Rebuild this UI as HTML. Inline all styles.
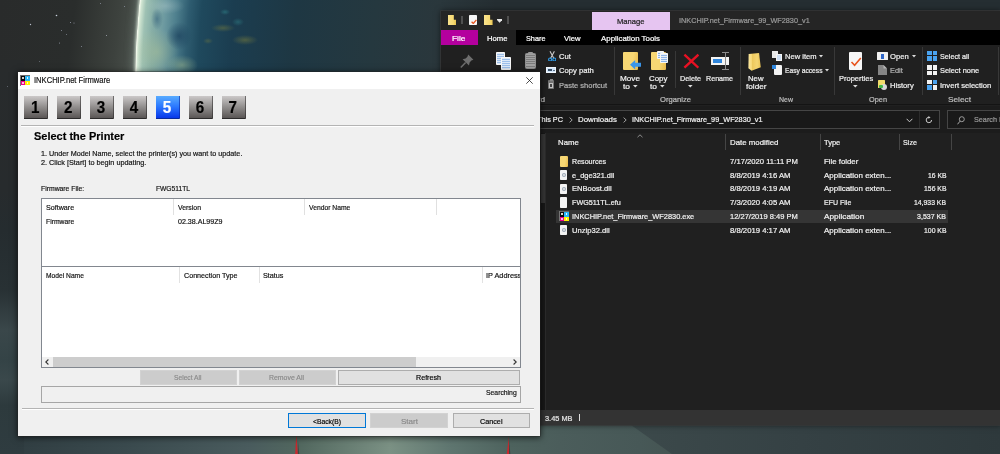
<!DOCTYPE html>
<html><head><meta charset="utf-8"><title>INKCHIP.net Firmware</title>
<style>
html,body{margin:0;padding:0;}
body{width:1000px;height:454px;overflow:hidden;position:relative;background:#2a2d2c;font-family:"Liberation Sans",sans-serif;}
#wall,#ex,#dlg{position:absolute;left:0;top:0;width:1000px;height:454px;overflow:hidden;}
#wall div,#ex div,#dlg div,svg,.t{position:absolute;}
.t{white-space:pre;line-height:1;transform-origin:0 0;}
#ex .t{-webkit-text-stroke:0.22px currentColor;}
#dlg .t{-webkit-text-stroke:0.18px currentColor;}
#wall{background:linear-gradient(90deg,#2f3c40 0,#3a4a4e 125px,#4a5c5e 250px,#52685f 300px,#7b9184 390px,#5f7670 450px,#4e635e 510px,#4b5d5b 560px,#475857 640px,#44524f 700px,#3c4a4b 1000px);}
#diag{left:600px;top:420px;width:400px;height:34px;clip-path:polygon(24px 0,400px 0,400px 34px,72px 34px);background:linear-gradient(90deg,#3d4b4c 0,#3a4749 80px,#354144 200px,#2e393c 400px);filter:blur(0.6px);}
#pclip{left:0;top:0;width:1000px;height:76px;overflow:hidden;background:linear-gradient(97deg,#292b2b 0,#2a2d2c 75px,#353936 100px,#3d423e 120px,#474d48 137px,#262d2e 441px,#1f2526 600px,#1b1f20 820px,#1a1d1e 1000px);}
#stars{left:0;top:0;width:1.3px;height:1.3px;border-radius:50%;background:transparent;box-shadow:56px 15px 0 0.3px #c9d0dc,30px 24px 0 0.2px #b9bfca,70px 22px 0 0 #9aa0ad,73.5px 22.5px 0 0 #9aa0ad,61px 30px 0 0 #8d93a0,66px 34px 0 0 #80858f,59px 42.5px 0 0 #9aa0ad,81px 46px 0 0 #8d93a0,106px 35px 0 0 #a9afba,100px 3px 0 0 #8d93a0,124px 6px 0 0 #8d93a0,39px 61px 0 0 #70757f,7px 86px 0 0 #70757f;}
#left{left:0;top:60px;width:24px;height:394px;background:linear-gradient(#282b2c 0,#272b2d 130px,#252c2f 170px,#283134 230px,#3a474a 270px,#344346 300px,#3a484b 320px,#2d3a3d 345px,#2f3c40 394px);}
#planet{left:135.4px;top:-700px;width:1570px;height:1570px;border-radius:50%;
 background:
  radial-gradient(ellipse 6px 11px at 22px 719px, rgba(45,90,120,.55), rgba(45,90,120,0) 100%),
  radial-gradient(ellipse 13px 14px at 44px 736px, rgba(28,66,94,.75), rgba(28,66,94,0) 100%),
  radial-gradient(ellipse 22px 24px at 22px 752px, rgba(172,194,150,.5), rgba(172,194,150,0) 100%),
  radial-gradient(ellipse 16px 10px at 47px 765px, rgba(160,185,140,.5), rgba(160,185,140,0) 100%),
  radial-gradient(ellipse 20px 8px at 30px 706px, rgba(185,208,210,.35), rgba(185,208,210,0) 100%),
  radial-gradient(ellipse 12px 4px at 88px 728px, rgba(125,128,60,.45), rgba(125,128,60,0) 100%),
  radial-gradient(ellipse 13px 5px at 110px 740px, rgba(125,128,60,.5), rgba(125,128,60,0) 100%),
  radial-gradient(ellipse 5px 3px at 73px 741px, rgba(120,125,60,.4), rgba(120,125,60,0) 100%),
  radial-gradient(ellipse 5px 3px at 90px 712px, rgba(60,170,170,.35), rgba(60,170,170,0) 100%),
  radial-gradient(ellipse 6px 4px at 103px 722px, rgba(60,170,170,.3), rgba(60,170,170,0) 100%),
  radial-gradient(closest-side, #252e32 0,#252e32 55%,#2a373c 62%,#25383f 70%,#1e3743 80%,#1b3d50 88%,#1f495d 92%,#2e5c70 93.6%,#4f808e 95.2%,#6c99a0 96.6%,#84aca6 98%,#9ec1b3 99.1%,#cfe4d1 99.7%,#f2f9ec 99.9%,#f2f9ec 100%);
 box-shadow:-1px 0 3px rgba(225,240,225,.75),-3px 0 9px rgba(150,170,160,.35);}
.red{background:#c8282d;}
</style></head>
<body>
<div id="wall">
<div id="pclip"><div id="planet"></div></div>
<div id="left"></div>
<div id="diag"></div>
<div id="stars"></div>
<svg style="left:290px;top:430px" width="230" height="24" viewBox="0 0 230 24"><path d="M6.3 4 L7.9 24 L5.2 24Z" fill="#c8282d"/><path d="M7.9 10 L9.2 24 L7.9 24Z" fill="rgba(30,35,35,.45)"/><path d="M218.9 6.5 L219 24 L216.8 24Z" fill="#c8282d"/><path d="M219 10 L220.4 24 L219 24Z" fill="rgba(30,35,35,.4)"/></svg>
</div>
<div id="ex"><div style="left:440.5px;top:10.5px;width:560px;height:414px;background:#202020;box-shadow:0 0 0 0.7px #3a3a3a,0 0 6px rgba(0,0,0,.6)"></div>
<div style="left:440.5px;top:10.5px;width:560px;height:19.5px;background:#252525;"></div>
<div style="left:440.5px;top:30px;width:560px;height:14.8px;background:#000;"></div>
<div style="left:441px;top:30px;width:37px;height:14.8px;background:#b4009e;"></div>
<div style="left:478px;top:30px;width:38px;height:14.8px;background:#202020;"></div>
<div style="left:592px;top:12px;width:78px;height:18px;background:#e6c5f1;"></div>
<span class="t" style="left:616.50px;top:17.98px;font-size:8.1px;color:#222;transform:scaleX(0.9402);">Manage</span>
<span class="t" style="left:678.80px;top:16.98px;font-size:7.9px;color:#9a9a9a;transform:scaleX(0.9236);">INKCHIP.net_Firmware_99_WF2830_v1</span>
<span class="t" style="left:452.00px;top:34.98px;font-size:8.1px;color:#fff;transform:scaleX(1.0347);">File</span>
<span class="t" style="left:487.00px;top:34.98px;font-size:8.1px;color:#fff;transform:scaleX(0.9493);">Home</span>
<span class="t" style="left:525.50px;top:34.98px;font-size:8.1px;color:#fff;transform:scaleX(0.9024);">Share</span>
<span class="t" style="left:564.00px;top:34.98px;font-size:8.1px;color:#fff;transform:scaleX(0.9479);">View</span>
<span class="t" style="left:600.50px;top:34.98px;font-size:8.1px;color:#fff;transform:scaleX(0.9737);">Application Tools</span>
<div style="left:447.5px;top:14.5px;width:8.8px;height:10.5px;background:#f8dc7c;clip-path:polygon(0 0,72% 0,72% 50%,100% 50%,100% 100%,0 100%);background:linear-gradient(90deg,#fbe38d 0,#f6d870 70%,#e8c350 100%)"></div>
<div style="left:461.3px;top:16px;width:1.4px;height:8.2px;background:#505050;"></div>
<div style="left:469.4px;top:15.2px;width:7.8px;height:10.2px;background:#f6f6f6;border-radius:0.8px"></div>
<svg style="left:470.6px;top:18.5px" width="6" height="5.5" viewBox="0 0 6 5.5"><path d="M0.6 2.8 L2.3 4.5 L5.4 0.8" fill="none" stroke="#e8541e" stroke-width="1.3"/></svg>
<div style="left:483.8px;top:14.5px;width:8.8px;height:10.5px;background:#f8dc7c;clip-path:polygon(0 0,72% 0,72% 50%,100% 50%,100% 100%,0 100%);background:linear-gradient(90deg,#fbe38d 0,#f6d870 70%,#e8c350 100%)"></div>
<div style="left:497.2px;top:18.6px;width:5.2px;height:1px;background:#e6e6e6;"></div>
<svg style="left:497.2px;top:20.4px" width="5.2" height="3" viewBox="0 0 5.2 3"><path d="M0 0 L5.2 0 L2.6 2.8Z" fill="#e6e6e6"/></svg>
<div style="left:507.2px;top:16px;width:1.4px;height:8.2px;background:#505050;"></div>
<div style="left:613.7px;top:47px;width:1px;height:48px;background:#383838;"></div>
<div style="left:675px;top:51px;width:1px;height:37px;background:#383838;"></div>
<div style="left:739.5px;top:47px;width:1px;height:48px;background:#383838;"></div>
<div style="left:834px;top:47px;width:1px;height:48px;background:#383838;"></div>
<div style="left:922px;top:47px;width:1px;height:48px;background:#383838;"></div>
<div style="left:998px;top:47px;width:1px;height:48px;background:#383838;"></div>
<svg style="left:459.5px;top:54px" width="14" height="14.5" viewBox="0 0 14 14.5"><path d="M8.2 0.6 L13.4 5.8 L11.4 6.6 L9.6 8.6 L9 11.6 L2.6 5.2 L5.6 4.6 L7.4 2.8Z" fill="#6e6e6e"/><path d="M5.6 8.6 L0.8 13.6" stroke="#6e6e6e" stroke-width="1.5"/></svg>
<div style="left:495.6px;top:52px;width:9.4px;height:12.6px;background:#e8f0fa;border-radius:0.8px;border:0.9px solid #f7f7f7;box-sizing:border-box;background:repeating-linear-gradient(#dce9f8 0 1.1px,#9dbfea 1.1px 2.1px)"></div>
<div style="left:500.9px;top:57px;width:10px;height:12.6px;background:#e8f0fa;border-radius:0.8px;border:0.9px solid #f7f7f7;box-sizing:border-box;background:repeating-linear-gradient(#dce9f8 0 1.1px,#9dbfea 1.1px 2.1px)"></div>
<div style="left:525px;top:53.4px;width:11.3px;height:15.6px;background:#8a8a8a;border-radius:1.2px;background:repeating-linear-gradient(#a2a2a2 0 1.1px,#7c7c7c 1.1px 2.1px);border:0.8px solid #8f8f8f;box-sizing:border-box"></div>
<div style="left:528.2px;top:51.8px;width:5px;height:2.6px;background:#9a9a9a;border-radius:1px 1px 0 0"></div>
<svg style="left:547.6px;top:50.6px" width="8.4" height="10.6" viewBox="0 0 8.4 10.6"><path d="M2 0.3 L5.9 7.4 M6.4 0.3 L2.5 7.4" stroke="#c9c9c9" stroke-width="1.1" fill="none"/><circle cx="2.1" cy="8.5" r="1.5" fill="none" stroke="#2f9be8" stroke-width="1.1"/><circle cx="6.3" cy="8.5" r="1.5" fill="none" stroke="#2f9be8" stroke-width="1.1"/></svg>
<span class="t" style="left:559.00px;top:52.98px;font-size:8.1px;color:#f0f0f0;transform:scaleX(0.9358);">Cut</span>
<div style="left:546.3px;top:67px;width:10px;height:6.4px;background:#d2e7fb;border:0.7px solid #f2f8fe;box-sizing:border-box"></div>
<div style="left:548px;top:69.3px;width:4.2px;height:1.8px;background:#3a4f66;"></div>
<div style="left:553px;top:70.2px;width:2px;height:0.9px;background:#5a6f86;"></div>
<span class="t" style="left:559.00px;top:66.97px;font-size:8.1px;color:#f0f0f0;transform:scaleX(0.9429);">Copy path</span>
<div style="left:547.7px;top:80px;width:6.8px;height:9px;background:#747474;border-radius:0.8px"></div>
<div style="left:549.6px;top:79.2px;width:3px;height:1.6px;background:#8a8a8a;"></div>
<div style="left:549px;top:82.6px;width:4.2px;height:5.2px;background:#c4c4c4;"></div>
<div style="left:550.4px;top:84px;width:1.6px;height:2.6px;background:#444;"></div>
<span class="t" style="left:559.00px;top:81.97px;font-size:8.1px;color:#b4b4b4;transform:scaleX(0.9275);">Paste shortcut</span>
<span class="t" style="left:509.60px;top:95.97px;font-size:7.9px;color:#bdbdbd;transform:scaleX(1.0361);">Clipboard</span>
<div style="left:623px;top:52px;width:15px;height:18px;background:#f7d774;border-radius:1px;background:linear-gradient(100deg,#f7d774 60%,#e9b949)"></div>
<svg style="left:629.8px;top:60.3px" width="11" height="9.4" viewBox="0 0 11 9.4"><path d="M0 4.7 L5.2 0 L5.2 2.7 L11 2.7 L11 6.7 L5.2 6.7 L5.2 9.4Z" fill="#3b96ea"/></svg>
<span class="t" style="left:620.00px;top:74.97px;font-size:8.1px;color:#f0f0f0;transform:scaleX(1.0103);">Move</span>
<span class="t" style="left:622.50px;top:82.97px;font-size:8.1px;color:#f0f0f0;transform:scaleX(1.0346);">to</span>
<svg style="left:632.6px;top:85.2px" width="5" height="3" viewBox="0 0 5 3"><path d="M0 0 L4.6 0 L2.3 2.6Z" fill="#ddd"/></svg>
<div style="left:651px;top:52px;width:15.2px;height:18px;background:#f7d774;border-radius:1px;background:linear-gradient(100deg,#f7d774 60%,#e9b949)"></div>
<div style="left:657px;top:50.5px;width:6.8px;height:8.8px;background:#e8f0fa;border-radius:0.8px;border:0.8px solid #f7f7f7;box-sizing:border-box;background:repeating-linear-gradient(#e4eefa 0 1.1px,#8fb4e6 1.1px 2.1px)"></div>
<div style="left:660.3px;top:53px;width:7.8px;height:9.6px;background:#e8f0fa;border-radius:0.8px;border:0.8px solid #f7f7f7;box-sizing:border-box;background:repeating-linear-gradient(#e4eefa 0 1.1px,#8fb4e6 1.1px 2.1px)"></div>
<span class="t" style="left:648.50px;top:74.97px;font-size:8.1px;color:#f0f0f0;transform:scaleX(0.9785);">Copy</span>
<span class="t" style="left:650.00px;top:82.97px;font-size:8.1px;color:#f0f0f0;transform:scaleX(1.0346);">to</span>
<svg style="left:660px;top:85.2px" width="5" height="3" viewBox="0 0 5 3"><path d="M0 0 L4.6 0 L2.3 2.6Z" fill="#ddd"/></svg>
<svg style="left:682.6px;top:52.6px" width="16.8" height="16.4" viewBox="0 0 18 17"><path d="M1.5 1.5 L16.5 15.5 M16.5 1.5 L1.5 15.5" stroke="#e81123" stroke-width="2.6" fill="none"/></svg>
<span class="t" style="left:680.00px;top:74.97px;font-size:8.1px;color:#f0f0f0;transform:scaleX(0.8972);">Delete</span>
<svg style="left:688.2px;top:84.8px" width="5" height="3" viewBox="0 0 5 3"><path d="M0 0 L4.6 0 L2.3 2.6Z" fill="#ddd"/></svg>
<div style="left:710.6px;top:56.5px;width:18.4px;height:8.6px;background:#f4f4f4;"></div>
<div style="left:713px;top:59px;width:8.6px;height:3.8px;background:#2f86dc;"></div>
<div style="left:725px;top:52.3px;width:1.1px;height:17.6px;background:#8c8c8c;"></div>
<div style="left:722.4px;top:52px;width:2.4px;height:1px;background:#8c8c8c;"></div>
<div style="left:726.3px;top:52px;width:2.4px;height:1px;background:#8c8c8c;"></div>
<div style="left:722.4px;top:69.2px;width:2.4px;height:1px;background:#8c8c8c;"></div>
<div style="left:726.3px;top:69.2px;width:2.4px;height:1px;background:#8c8c8c;"></div>
<span class="t" style="left:706.00px;top:74.97px;font-size:8.1px;color:#f0f0f0;transform:scaleX(0.8825);">Rename</span>
<span class="t" style="left:660.00px;top:95.97px;font-size:7.9px;color:#bdbdbd;transform:scaleX(0.9678);">Organize</span>
<div style="left:748.4px;top:53px;width:12.4px;height:17.8px;background:#f6d46c;clip-path:polygon(2% 5%,86% 0,100% 80%,26% 100%,0 86%);background:linear-gradient(90deg,#fce9a4 0,#f7d875 30%,#edc85c 32%,#f5d672 70%,#e6bf52 100%)"></div>
<span class="t" style="left:748.00px;top:74.97px;font-size:8.1px;color:#f0f0f0;transform:scaleX(0.9566);">New</span>
<span class="t" style="left:745.50px;top:82.97px;font-size:8.1px;color:#f0f0f0;transform:scaleX(1.0123);">folder</span>
<div style="left:772px;top:50.5px;width:6px;height:7px;background:#e9e9e9;"></div>
<div style="left:775.5px;top:53.5px;width:6.5px;height:7.5px;background:#cfe0f5;border:0.8px solid #f5f5f5;box-sizing:border-box"></div>
<span class="t" style="left:784.50px;top:52.98px;font-size:8.1px;color:#f0f0f0;transform:scaleX(0.9338);">New item</span>
<svg style="left:818.5px;top:54.5px" width="4" height="3" viewBox="0 0 4 3"><path d="M0 0 L4 0 L2 2.4Z" fill="#ddd"/></svg>
<div style="left:773.5px;top:65px;width:8px;height:10px;background:#f2f2f2;border-radius:1px"></div>
<div style="left:772px;top:65px;width:3.5px;height:3.5px;background:#2f86dc;"></div>
<span class="t" style="left:784.50px;top:66.97px;font-size:8.1px;color:#f0f0f0;transform:scaleX(0.8253);">Easy access</span>
<svg style="left:824.5px;top:69px" width="4" height="3" viewBox="0 0 4 3"><path d="M0 0 L4 0 L2 2.4Z" fill="#ddd"/></svg>
<span class="t" style="left:779.00px;top:95.97px;font-size:7.9px;color:#bdbdbd;transform:scaleX(0.8863);">New</span>
<div style="left:848.8px;top:52px;width:13.5px;height:18px;background:#f6f6f6;border-radius:1px"></div>
<svg style="left:849.5px;top:56.5px" width="12" height="10" viewBox="0 0 12 10"><path d="M1.5 5 L4.6 8.2 L10.8 1" fill="none" stroke="#e8541e" stroke-width="1.6"/></svg>
<span class="t" style="left:838.80px;top:74.97px;font-size:8.1px;color:#f0f0f0;transform:scaleX(0.9271);">Properties</span>
<svg style="left:853.3px;top:84.8px" width="5" height="3" viewBox="0 0 5 3"><path d="M0 0 L4.6 0 L2.3 2.6Z" fill="#ddd"/></svg>
<div style="left:877px;top:52px;width:10.8px;height:8px;background:#f0f0f0;border-radius:0.5px"></div>
<div style="left:880.5px;top:54px;width:3.8px;height:4.5px;background:#2f66c8;"></div>
<span class="t" style="left:889.80px;top:52.98px;font-size:8.1px;color:#f0f0f0;transform:scaleX(0.9489);">Open</span>
<svg style="left:911.5px;top:54.5px" width="4" height="3" viewBox="0 0 4 3"><path d="M0 0 L4 0 L2 2.4Z" fill="#ddd"/></svg>
<svg style="left:878px;top:65px" width="9" height="10" viewBox="0 0 9 10"><path d="M0 0 L5.5 0 L9 3.5 L9 10 L0 10Z" fill="#858585"/><path d="M5.5 0 L5.5 3.5 L9 3.5Z" fill="#b5b5b5"/></svg>
<span class="t" style="left:889.80px;top:66.97px;font-size:8.1px;color:#b4b4b4;transform:scaleX(0.9174);">Edit</span>
<div style="left:877.5px;top:79.5px;width:7.5px;height:8.5px;background:#f2dc6b;border-radius:0.5px"></div>
<div style="left:880.5px;top:83.5px;width:6.5px;height:6.5px;background:#d9d9d9;border-radius:50%"></div>
<div style="left:879px;top:84.5px;width:3.5px;height:3px;background:#41b649;border-radius:1px"></div>
<span class="t" style="left:889.80px;top:81.97px;font-size:8.1px;color:#f0f0f0;transform:scaleX(0.9409);">History</span>
<span class="t" style="left:868.50px;top:95.97px;font-size:7.9px;color:#bdbdbd;transform:scaleX(0.9320);">Open</span>
<div style="left:927.0px;top:51.0px;width:4.6px;height:4.4px;background:#4aa3f0;"></div><div style="left:932.6px;top:51.0px;width:4.6px;height:4.4px;background:#4aa3f0;"></div><div style="left:927.0px;top:56.4px;width:4.6px;height:4.4px;background:#4aa3f0;"></div><div style="left:932.6px;top:56.4px;width:4.6px;height:4.4px;background:#4aa3f0;"></div>
<span class="t" style="left:939.80px;top:52.98px;font-size:8.1px;color:#f0f0f0;transform:scaleX(0.8891);">Select all</span>
<div style="left:927.0px;top:65.4px;width:4.6px;height:4.4px;background:#f2f2f2;"></div><div style="left:932.6px;top:65.4px;width:4.6px;height:4.4px;background:#f2f2f2;"></div><div style="left:927.0px;top:70.80000000000001px;width:4.6px;height:4.4px;background:#f2f2f2;"></div><div style="left:932.6px;top:70.80000000000001px;width:4.6px;height:4.4px;background:#f2f2f2;"></div>
<span class="t" style="left:939.80px;top:66.97px;font-size:8.1px;color:#f0f0f0;transform:scaleX(0.9170);">Select none</span>
<div style="left:927.0px;top:79.8px;width:4.6px;height:4.4px;background:#f2f2f2;"></div><div style="left:932.6px;top:79.8px;width:4.6px;height:4.4px;background:#4aa3f0;"></div><div style="left:927.0px;top:85.2px;width:4.6px;height:4.4px;background:#4aa3f0;"></div><div style="left:932.6px;top:85.2px;width:4.6px;height:4.4px;background:#f2f2f2;"></div>
<span class="t" style="left:939.80px;top:81.97px;font-size:8.1px;color:#f0f0f0;transform:scaleX(0.9405);">Invert selection</span>
<span class="t" style="left:947.50px;top:95.97px;font-size:7.9px;color:#bdbdbd;transform:scaleX(1.0484);">Select</span>
<div style="left:440.5px;top:104.3px;width:560px;height:1.2px;background:#141414;"></div>
<div style="left:440.5px;top:105.5px;width:560px;height:27px;background:#1c1c1c;"></div>
<div style="left:500px;top:109.5px;width:439.5px;height:19.5px;background:#191919;border:1px solid #454545;box-sizing:border-box"></div>
<div style="left:918.7px;top:110.5px;width:1px;height:17.5px;background:#2c2c2c;"></div>
<div style="left:946.8px;top:109.5px;width:60px;height:19.5px;background:#191919;border:1px solid #454545;box-sizing:border-box"></div>
<span class="t" style="left:536.50px;top:115.97px;font-size:8.1px;color:#f0f0f0;transform:scaleX(0.9029);">This PC</span>
<span class="t" style="left:578.00px;top:115.97px;font-size:8.1px;color:#f0f0f0;transform:scaleX(0.9689);">Downloads</span>
<span class="t" style="left:632.00px;top:115.97px;font-size:8.1px;color:#f0f0f0;transform:scaleX(0.8990);">INKCHIP.net_Firmware_99_WF2830_v1</span>
<svg style="left:569px;top:117px" width="4" height="6" viewBox="0 0 4 6"><path d="M0.6 0.6 L3.2 3 L0.6 5.4" fill="none" stroke="#b0b0b0" stroke-width="0.9"/></svg>
<svg style="left:622.5px;top:117px" width="4" height="6" viewBox="0 0 4 6"><path d="M0.6 0.6 L3.2 3 L0.6 5.4" fill="none" stroke="#b0b0b0" stroke-width="0.9"/></svg>
<svg style="left:906px;top:118px" width="7" height="5" viewBox="0 0 7 5"><path d="M0.6 0.8 L3.5 3.8 L6.4 0.8" fill="none" stroke="#c8c8c8" stroke-width="1"/></svg>
<svg style="left:925px;top:116px" width="8" height="8" viewBox="0 0 8 8"><path d="M6.6 4 A2.7 2.7 0 1 1 4 1.3" fill="none" stroke="#c8c8c8" stroke-width="1"/><path d="M3.4 0 L5.6 1.4 L3.4 2.8Z" fill="#c8c8c8"/></svg>
<svg style="left:957px;top:115.5px" width="8" height="9" viewBox="0 0 8 9"><circle cx="4.8" cy="3.2" r="2.5" fill="none" stroke="#a8a8a8" stroke-width="0.9"/><path d="M3 5.2 L0.5 8.3" stroke="#a8a8a8" stroke-width="1"/></svg>
<span class="t" style="left:974.00px;top:115.97px;font-size:8.1px;color:#9a9a9a;transform:scaleX(0.8953);">Search I</span>
<div style="left:540px;top:132.5px;width:5px;height:277.5px;background:#181818;"></div>
<div style="left:540.5px;top:134px;width:4.3px;height:69px;background:#363636;"></div>
<div style="left:545px;top:132.5px;width:0.8px;height:277.5px;background:#2b2b2b;"></div>
<span class="t" style="left:558.00px;top:138.97px;font-size:8.1px;color:#f0f0f0;transform:scaleX(0.9632);">Name</span>
<svg style="left:636.5px;top:133.5px" width="6" height="4" viewBox="0 0 6 4"><path d="M0.5 3.2 L3 0.8 L5.5 3.2" fill="none" stroke="#aaa" stroke-width="0.8"/></svg>
<div style="left:724.5px;top:133.6px;width:1px;height:16px;background:#454545;"></div>
<div style="left:819.7px;top:133.6px;width:1px;height:16px;background:#454545;"></div>
<div style="left:898.5px;top:133.6px;width:1px;height:16px;background:#454545;"></div>
<div style="left:951.4px;top:133.6px;width:1px;height:16px;background:#454545;"></div>
<span class="t" style="left:729.50px;top:138.97px;font-size:8.1px;color:#f0f0f0;transform:scaleX(0.9709);">Date modified</span>
<span class="t" style="left:823.70px;top:138.97px;font-size:8.1px;color:#f0f0f0;transform:scaleX(0.9289);">Type</span>
<span class="t" style="left:902.50px;top:138.97px;font-size:8.1px;color:#f0f0f0;transform:scaleX(0.8889);">Size</span>
<div style="left:556px;top:210px;width:391.5px;height:13px;background:#353535;"></div>
<span class="t" style="left:571.80px;top:157.97px;font-size:8.1px;color:#f0f0f0;transform:scaleX(0.8788);">Resources</span>
<span class="t" style="left:729.50px;top:157.97px;font-size:8.1px;color:#f0f0f0;transform:scaleX(0.9456);">7/17/2020 11:11 PM</span>
<span class="t" style="left:823.70px;top:157.97px;font-size:8.1px;color:#f0f0f0;transform:scaleX(0.9649);">File folder</span>
<div style="left:559.6px;top:156.0px;width:8px;height:10.6px;background:#f7d774;border-radius:1px;background:linear-gradient(100deg,#f7d774 60%,#e9b949)"></div>
<span class="t" style="left:571.80px;top:171.97px;font-size:8.1px;color:#f0f0f0;transform:scaleX(0.9103);">e_dge321.dll</span>
<span class="t" style="left:729.50px;top:171.97px;font-size:8.1px;color:#f0f0f0;transform:scaleX(0.9535);">8/8/2019 4:16 AM</span>
<span class="t" style="left:823.70px;top:171.97px;font-size:8.1px;color:#f0f0f0;transform:scaleX(0.9841);">Application exten...</span>
<span class="t" style="left:927.50px;top:171.97px;font-size:8.1px;color:#f0f0f0;transform:scaleX(0.8385);">16 KB</span>
<div style="left:560px;top:169.78px;width:7.4px;height:10.4px;background:#f4f4f4;border-radius:0.8px"></div>
<div style="left:561.6px;top:172.78px;width:4.4px;height:4.4px;background:#9aa7b5;border-radius:50%"></div>
<div style="left:562.8px;top:173.98px;width:2px;height:2px;background:#e8e8e8;border-radius:50%"></div>
<span class="t" style="left:571.80px;top:184.97px;font-size:8.1px;color:#f0f0f0;transform:scaleX(0.9386);">ENBoost.dll</span>
<span class="t" style="left:729.50px;top:184.97px;font-size:8.1px;color:#f0f0f0;transform:scaleX(0.9535);">8/8/2019 4:19 AM</span>
<span class="t" style="left:823.70px;top:184.97px;font-size:8.1px;color:#f0f0f0;transform:scaleX(0.9841);">Application exten...</span>
<span class="t" style="left:923.50px;top:184.97px;font-size:8.1px;color:#f0f0f0;transform:scaleX(0.8471);">156 KB</span>
<div style="left:560px;top:183.56px;width:7.4px;height:10.4px;background:#f4f4f4;border-radius:0.8px"></div>
<div style="left:561.6px;top:186.56px;width:4.4px;height:4.4px;background:#9aa7b5;border-radius:50%"></div>
<div style="left:562.8px;top:187.76px;width:2px;height:2px;background:#e8e8e8;border-radius:50%"></div>
<span class="t" style="left:571.80px;top:198.97px;font-size:8.1px;color:#f0f0f0;transform:scaleX(0.8898);">FWG511TL.efu</span>
<span class="t" style="left:729.50px;top:198.97px;font-size:8.1px;color:#f0f0f0;transform:scaleX(0.9535);">7/3/2020 4:05 AM</span>
<span class="t" style="left:823.70px;top:198.97px;font-size:8.1px;color:#f0f0f0;transform:scaleX(0.8671);">EFU File</span>
<span class="t" style="left:914.00px;top:198.97px;font-size:8.1px;color:#f0f0f0;transform:scaleX(0.8463);">14,933 KB</span>
<div style="left:560px;top:197.34px;width:7.4px;height:10.4px;background:#f4f4f4;border-radius:0.8px"></div>
<span class="t" style="left:571.80px;top:212.97px;font-size:8.1px;color:#f0f0f0;transform:scaleX(0.9126);">INKCHIP.net_Firmware_WF2830.exe</span>
<span class="t" style="left:729.50px;top:212.97px;font-size:8.1px;color:#f0f0f0;transform:scaleX(0.9300);">12/27/2019 8:49 PM</span>
<span class="t" style="left:823.70px;top:212.97px;font-size:8.1px;color:#f0f0f0;transform:scaleX(1.0174);">Application</span>
<span class="t" style="left:917.00px;top:212.97px;font-size:8.1px;color:#f0f0f0;transform:scaleX(0.8705);">3,537 KB</span>
<div style="left:559.3px;top:211.32px;width:9.579px;height:0.93px;background:#6a6a6a;"></div><div style="left:559.3px;top:211.32px;width:0.7440000000000001px;height:9.858px;background:#777;"></div><div style="left:560.044px;top:212.25px;width:4.278px;height:4.278px;background:#0d0d0d;"></div><div style="left:561.439px;top:213.459px;width:1.4880000000000002px;height:1.86px;background:#f0f0f0;border-radius:40%"></div><div style="left:564.322px;top:212.25px;width:4.278px;height:4.278px;background:#29b6f6;"></div><div style="left:565.624px;top:213.459px;width:1.395px;height:1.86px;background:#e2f4fe;"></div><div style="left:560.044px;top:216.528px;width:4.278px;height:4.5569999999999995px;background:#ec008c;"></div><div style="left:561.439px;top:217.737px;width:1.395px;height:1.86px;background:#fab9df;"></div><div style="left:564.322px;top:216.528px;width:4.278px;height:4.5569999999999995px;background:#fff200;"></div><div style="left:565.624px;top:217.737px;width:1.302px;height:1.86px;background:#fffcc0;"></div>
<span class="t" style="left:571.80px;top:226.97px;font-size:8.1px;color:#f0f0f0;transform:scaleX(0.9414);">Unzip32.dll</span>
<span class="t" style="left:729.50px;top:226.97px;font-size:8.1px;color:#f0f0f0;transform:scaleX(0.9535);">8/8/2019 4:17 AM</span>
<span class="t" style="left:823.70px;top:226.97px;font-size:8.1px;color:#f0f0f0;transform:scaleX(0.9841);">Application exten...</span>
<span class="t" style="left:923.50px;top:226.97px;font-size:8.1px;color:#f0f0f0;transform:scaleX(0.8471);">100 KB</span>
<div style="left:560px;top:224.9px;width:7.4px;height:10.4px;background:#f4f4f4;border-radius:0.8px"></div>
<div style="left:561.6px;top:227.9px;width:4.4px;height:4.4px;background:#9aa7b5;border-radius:50%"></div>
<div style="left:562.8px;top:229.1px;width:2px;height:2px;background:#e8e8e8;border-radius:50%"></div>
<div style="left:440.5px;top:410px;width:560px;height:14.5px;background:#333;"></div>
<span class="t" style="left:545.00px;top:414.98px;font-size:8.1px;color:#e6e6e6;transform:scaleX(0.9119);">3.45 MB</span>
<div style="left:579.2px;top:414px;width:0.9px;height:7.4px;background:#ddd;"></div></div>
<div id="dlg"><div style="left:17.5px;top:72px;width:522.5px;height:363.5px;background:#f0f0f0;box-shadow:0 0 0 0.6px rgba(40,40,40,.6),0 1px 6px 1px rgba(0,0,0,.6)"></div>
<div style="left:17.5px;top:72px;width:522.5px;height:17px;background:#fff;"></div>
<div style="left:20px;top:75px;width:10.3px;height:1.0px;background:#6a6a6a;"></div><div style="left:20px;top:75px;width:0.8px;height:10.6px;background:#777;"></div><div style="left:20.8px;top:76.0px;width:4.6px;height:4.6px;background:#0d0d0d;"></div><div style="left:22.3px;top:77.3px;width:1.6px;height:2.0px;background:#f0f0f0;border-radius:40%"></div><div style="left:25.4px;top:76.0px;width:4.6px;height:4.6px;background:#29b6f6;"></div><div style="left:26.799999999999997px;top:77.3px;width:1.5px;height:2.0px;background:#e2f4fe;"></div><div style="left:20.8px;top:80.6px;width:4.6px;height:4.8999999999999995px;background:#ec008c;"></div><div style="left:22.3px;top:81.89999999999999px;width:1.5px;height:2.0px;background:#fab9df;"></div><div style="left:25.4px;top:80.6px;width:4.6px;height:4.8999999999999995px;background:#fff200;"></div><div style="left:26.799999999999997px;top:81.89999999999999px;width:1.4px;height:2.0px;background:#fffcc0;"></div>
<span class="t" style="left:33.80px;top:75.97px;font-size:8.4px;color:#111;transform:scaleX(0.9061);">INKCHIP.net Firmware</span>
<svg style="left:526px;top:77px" width="7" height="7" viewBox="0 0 7 7"><path d="M0.3 0.3 L6.7 6.7 M6.7 0.3 L0.3 6.7" stroke="#222" stroke-width="0.8"/></svg>
<div style="left:24.3px;top:96.4px;width:23.7px;height:22.9px;background:linear-gradient(#cbc8c8,#918e8d 50%,#5a5655);box-sizing:border-box;border-right:1px solid rgba(40,38,38,.55);border-bottom:1.3px solid #2c2b2b"></div>
<span class="t" style="left:31.00px;top:98.6px;font-size:15.2px;font-weight:bold;color:#000;transform:scaleY(1.14);transform-origin:50% 55%">1</span>
<div style="left:57.230000000000004px;top:96.4px;width:23.7px;height:22.9px;background:linear-gradient(#cbc8c8,#918e8d 50%,#5a5655);box-sizing:border-box;border-right:1px solid rgba(40,38,38,.55);border-bottom:1.3px solid #2c2b2b"></div>
<span class="t" style="left:63.93px;top:98.6px;font-size:15.2px;font-weight:bold;color:#000;transform:scaleY(1.14);transform-origin:50% 55%">2</span>
<div style="left:90.16px;top:96.4px;width:23.7px;height:22.9px;background:linear-gradient(#cbc8c8,#918e8d 50%,#5a5655);box-sizing:border-box;border-right:1px solid rgba(40,38,38,.55);border-bottom:1.3px solid #2c2b2b"></div>
<span class="t" style="left:96.86px;top:98.6px;font-size:15.2px;font-weight:bold;color:#000;transform:scaleY(1.14);transform-origin:50% 55%">3</span>
<div style="left:123.08999999999999px;top:96.4px;width:23.7px;height:22.9px;background:linear-gradient(#cbc8c8,#918e8d 50%,#5a5655);box-sizing:border-box;border-right:1px solid rgba(40,38,38,.55);border-bottom:1.3px solid #2c2b2b"></div>
<span class="t" style="left:129.79px;top:98.6px;font-size:15.2px;font-weight:bold;color:#000;transform:scaleY(1.14);transform-origin:50% 55%">4</span>
<div style="left:156.02px;top:96.4px;width:23.7px;height:22.9px;background:linear-gradient(#59acff,#2b78ff 48%,#0838ea);box-sizing:border-box;border-right:1px solid rgba(10,40,160,.6);border-bottom:1.3px solid #0a2a9a"></div>
<span class="t" style="left:162.72px;top:98.6px;font-size:15.2px;font-weight:bold;color:#fff;transform:scaleY(1.14);transform-origin:50% 55%">5</span>
<div style="left:188.95000000000002px;top:96.4px;width:23.7px;height:22.9px;background:linear-gradient(#cbc8c8,#918e8d 50%,#5a5655);box-sizing:border-box;border-right:1px solid rgba(40,38,38,.55);border-bottom:1.3px solid #2c2b2b"></div>
<span class="t" style="left:195.65px;top:98.6px;font-size:15.2px;font-weight:bold;color:#000;transform:scaleY(1.14);transform-origin:50% 55%">6</span>
<div style="left:221.88px;top:96.4px;width:23.7px;height:22.9px;background:linear-gradient(#cbc8c8,#918e8d 50%,#5a5655);box-sizing:border-box;border-right:1px solid rgba(40,38,38,.55);border-bottom:1.3px solid #2c2b2b"></div>
<span class="t" style="left:228.58px;top:98.6px;font-size:15.2px;font-weight:bold;color:#000;transform:scaleY(1.14);transform-origin:50% 55%">7</span>
<div style="left:21px;top:124.6px;width:513px;height:1px;background:#b4b4b4;"></div>
<div style="left:21px;top:125.6px;width:513px;height:1px;background:#fff;"></div>
<span class="t" style="left:34.40px;top:130.97px;font-size:11.3px;color:#000;font-weight:bold;transform:scaleX(0.9729);">Select the Printer</span>
<span class="t" style="left:40.60px;top:149.97px;font-size:7.2px;color:#111;transform:scaleX(1.0042);">1. Under Model Name, select the printer(s) you want to update.</span>
<span class="t" style="left:40.60px;top:158.97px;font-size:7.2px;color:#111;transform:scaleX(1.0145);">2. Click [Start] to begin updating.</span>
<span class="t" style="left:40.60px;top:184.97px;font-size:7.2px;color:#111;transform:scaleX(0.9488);">Firmware File:</span>
<span class="t" style="left:155.50px;top:184.97px;font-size:7.2px;color:#111;transform:scaleX(0.9283);">FWG511TL</span>
<div style="left:41px;top:198px;width:480px;height:170.3px;background:#fff;box-sizing:border-box;border:1px solid #82878f"></div>
<div style="left:41px;top:265.6px;width:480px;height:1.2px;background:#82878f;"></div>
<div style="left:173px;top:199px;width:1px;height:15.6px;background:#e0e0e0;"></div>
<div style="left:304px;top:199px;width:1px;height:15.6px;background:#e0e0e0;"></div>
<div style="left:436px;top:199px;width:1px;height:15.6px;background:#e0e0e0;"></div>
<span class="t" style="left:45.60px;top:203.97px;font-size:7.2px;color:#111;transform:scaleX(0.9938);">Software</span>
<span class="t" style="left:177.50px;top:203.97px;font-size:7.2px;color:#111;transform:scaleX(0.9590);">Version</span>
<span class="t" style="left:309.20px;top:203.97px;font-size:7.2px;color:#111;transform:scaleX(0.9396);">Vendor Name</span>
<span class="t" style="left:45.60px;top:217.97px;font-size:7.2px;color:#111;transform:scaleX(0.9415);">Firmware</span>
<span class="t" style="left:177.50px;top:217.97px;font-size:7.2px;color:#111;transform:scaleX(0.9851);">02.38.AL99Z9</span>
<div style="left:179px;top:267px;width:1px;height:15.5px;background:#e2e2e2;"></div>
<div style="left:258.5px;top:267px;width:1px;height:15.5px;background:#e2e2e2;"></div>
<div style="left:481.5px;top:267px;width:1px;height:15.5px;background:#e2e2e2;"></div>
<span class="t" style="left:45.60px;top:271.98px;font-size:7.2px;color:#111;transform:scaleX(0.9301);">Model Name</span>
<span class="t" style="left:183.50px;top:271.98px;font-size:7.2px;color:#111;transform:scaleX(0.9942);">Connection Type</span>
<span class="t" style="left:262.50px;top:271.98px;font-size:7.2px;color:#111;transform:scaleX(1.0054);">Status</span>
<div style="left:480px;top:267px;width:40px;height:16px;overflow:hidden"><span class="t" style="left:6.30px;top:4.98px;font-size:7.2px;color:#111;transform:scaleX(1.0190);">IP Address</span></div>
<div style="left:42px;top:356.8px;width:478px;height:10.5px;background:#f0f0f0;"></div>
<div style="left:53px;top:356.8px;width:363px;height:10.5px;background:#cdcdcd;"></div>
<svg style="left:45px;top:359px" width="4" height="6" viewBox="0 0 4 6"><path d="M3.4 0.5 L0.8 3 L3.4 5.5" fill="none" stroke="#333" stroke-width="1.1"/></svg>
<svg style="left:512.5px;top:359px" width="4" height="6" viewBox="0 0 4 6"><path d="M0.6 0.5 L3.2 3 L0.6 5.5" fill="none" stroke="#333" stroke-width="1.1"/></svg>
<div style="left:140px;top:369.6px;width:97px;height:15.399999999999977px;background:#cccccc;box-sizing:border-box;border:1px solid #d2d2d2"></div><span class="t" style="left:174.00px;top:373.98px;font-size:7.2px;color:#8a8a8a;transform:scaleX(0.9297);">Select All</span>
<div style="left:238.8px;top:369.6px;width:97.19999999999999px;height:15.399999999999977px;background:#cccccc;box-sizing:border-box;border:1px solid #d2d2d2"></div><span class="t" style="left:269.00px;top:373.98px;font-size:7.2px;color:#8a8a8a;transform:scaleX(0.9626);">Remove All</span>
<div style="left:337.6px;top:369.6px;width:182.0px;height:15.399999999999977px;background:#e1e1e1;box-sizing:border-box;border:1px solid #adadad"></div><span class="t" style="left:415.50px;top:373.98px;font-size:7.2px;color:#000;transform:scaleX(0.9932);">Refresh</span>
<div style="left:41px;top:386px;width:479.6px;height:16.5px;background:#f0f0f0;box-sizing:border-box;border:1px solid #a6a6a6"></div>
<span class="t" style="left:485.50px;top:388.98px;font-size:7.2px;color:#111;transform:scaleX(0.9483);">Searching</span>
<div style="left:22px;top:407.6px;width:512px;height:1px;background:#b4b4b4;"></div>
<div style="left:22px;top:408.6px;width:512px;height:1px;background:#fff;"></div>
<div style="left:288px;top:413.3px;width:77.5px;height:15.0px;background:#e1e1e1;box-sizing:border-box;border:1.4px solid #0078d7"></div><span class="t" style="left:312.50px;top:417.98px;font-size:7.2px;color:#000;transform:scaleX(0.9407);">&lt;Back(B)</span>
<div style="left:370px;top:413.3px;width:77.5px;height:15.0px;background:#cccccc;box-sizing:border-box;border:1px solid #d2d2d2"></div><span class="t" style="left:400.50px;top:417.98px;font-size:7.2px;color:#8a8a8a;transform:scaleX(1.1193);">Start</span>
<div style="left:452.5px;top:413.3px;width:77.10000000000002px;height:15.0px;background:#e1e1e1;box-sizing:border-box;border:1px solid #adadad"></div><span class="t" style="left:480.00px;top:417.98px;font-size:7.2px;color:#000;transform:scaleX(1.0056);">Cancel</span></div>
</body></html>
